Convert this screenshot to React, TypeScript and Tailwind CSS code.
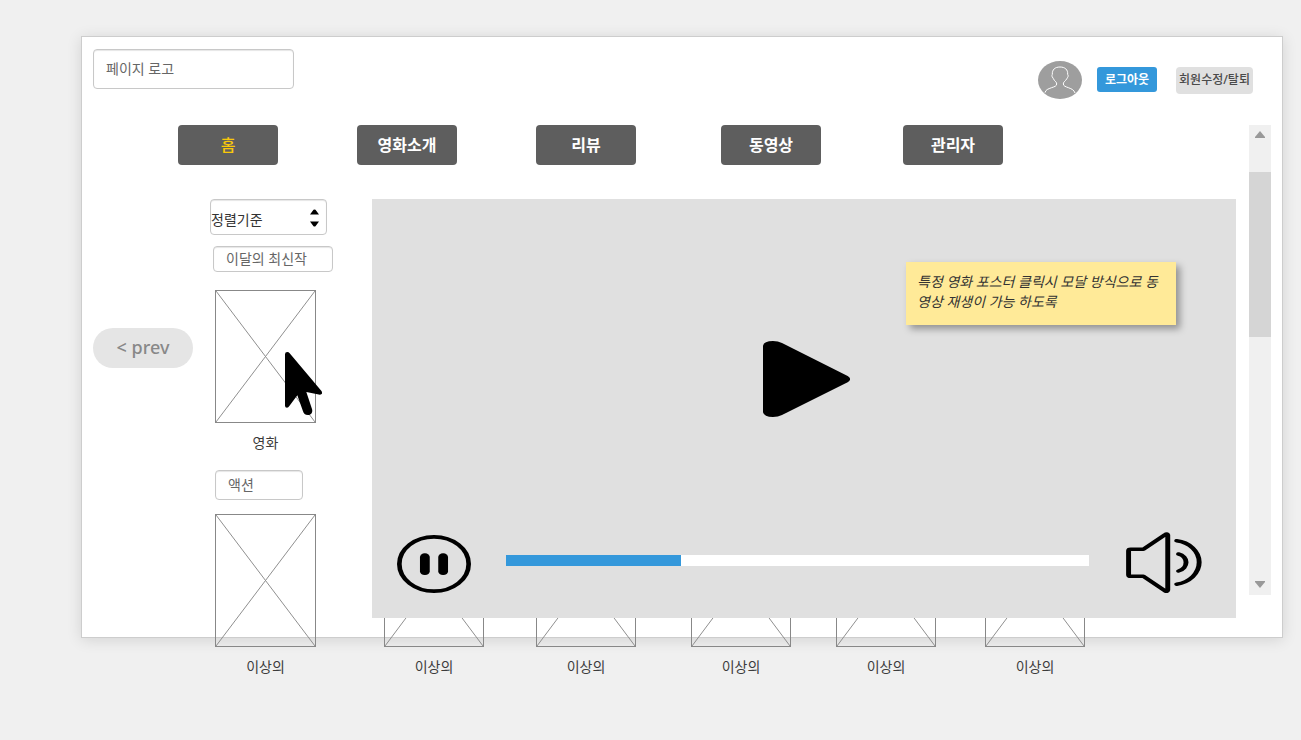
import { useState } from 'react';

const navItems = [
  { label: '홈', spacing: '', tone: 'text-[#f8c80a] font-medium' },
  { label: '영화소개', spacing: 'ml-[79px]', tone: 'text-white font-bold' },
  { label: '리뷰', spacing: 'ml-[79px]', tone: 'text-white font-bold' },
  { label: '동영상', spacing: 'ml-[85px]', tone: 'text-white font-bold' },
  { label: '관리자', spacing: 'ml-[82px]', tone: 'text-white font-bold' },
];

const shelf = ['', 'ml-[68px]', 'ml-[52px]', 'ml-[55px]', 'ml-[45px]', 'ml-[49px]'];

const fieldClass =
  'block rounded-[4px] border border-[#c8c8c8] bg-white px-3 pb-[2px] text-sm text-[#666] shadow-[inset_0_1px_1px_rgba(0,0,0,0.1)] outline-none';

function Poster({ title, wide = false }: { title: string; wide?: boolean }) {
  return (
    <figure className={wide ? 'w-[101px]' : 'w-[100px]'}>
      <svg className="block h-[133px] w-full border border-[#888]" viewBox="0 0 100 100" preserveAspectRatio="none" aria-hidden="true">
        <path d="M0 0L100 100M100 0L0 100" stroke="#8f8f8f" strokeWidth="1" vectorEffect="non-scaling-stroke" />
      </svg>
      <figcaption className="mt-[10px] text-center text-sm leading-5 text-[#3c3c3c]">{title}</figcaption>
    </figure>
  );
}

function Avatar() {
  return (
    <svg className="h-[38px] w-11" viewBox="0 0 132 114" role="img" aria-label="프로필">
      <ellipse cx="66" cy="57" rx="66" ry="57" fill="#9e9e9e" />
      <path
        d="M21 95C23 86 30 84 41 80C50 77 56 75 56 69C56 64 53 62 49 58C46 54 46 51 43 48C41 45 42 42 43 40C42 26 51 18 66 18C81 18 90 26 89 40C91 43 91 46 89 49C87 52 86 55 83 58C79 62 76 64 76 69C76 75 83 77 91 80C102 84 108 87 111 96"
        fill="none"
        stroke="#fff"
        strokeWidth="3"
      />
    </svg>
  );
}

function Cursor() {
  return (
    <svg className="pointer-events-none absolute top-[62px] left-[70px] h-16 w-[38px]" viewBox="0 0 114 192" aria-hidden="true">
      <path d="M0 7Q0 0 7 0Q11 0 14 4L110 118Q114 128 105 128L64 120L81 171C84 181 79 189 69 189C60 189 56 185 54 178L37 130L13 162Q10 167 6 167Q0 167 0 161Z" />
    </svg>
  );
}

function PlayIcon() {
  return (
    <svg className="h-[76px] w-[87px]" viewBox="0 0 261 228" aria-hidden="true">
      <path d="M0 14Q3 0 30 0Q45 0 57 6L254 105Q262 110 261 114Q262 119 254 124L57 222Q45 228 30 228Q3 228 0 214Z" />
    </svg>
  );
}

function PauseIcon() {
  return (
    <svg className="h-[58px] w-[74px]" viewBox="0 0 174 174" preserveAspectRatio="none" aria-hidden="true">
      <circle cx="87" cy="87" r="81.5" fill="none" stroke="#000" strokeWidth="11" />
      <rect x="54" y="55" width="23" height="65" rx="11" />
      <rect x="97" y="55" width="23" height="65" rx="11" />
    </svg>
  );
}

function SpeakerIcon() {
  return (
    <svg className="h-[61px] w-[76px]" viewBox="0 0 162 183" preserveAspectRatio="none" aria-hidden="true">
      <g fill="none" stroke="#000" strokeWidth="10.5" strokeLinecap="round" strokeLinejoin="round">
        <path d="M10 51.5H37L83 8Q88 3 89 9V174Q88 181 83 176L37 133H10Q5.500 133 5.500 128V56.5Q5.500 51.5 10 51.5Z" />
        <path d="M108 26.5C135 31 156 58 156 91C156 124 135 151 108 156.5" />
        <path d="M112 66C122 69 128 80 128 91C128 102 122 113 112 117" />
      </g>
    </svg>
  );
}

export default function App() {
  const [logo, setLogo] = useState('페이지 로고');
  const [latest, setLatest] = useState('이달의 최신작');
  const [genre, setGenre] = useState('액션');

  return (
    <div className="min-h-screen bg-[#f0f0f0] pt-9 pr-[18px] pb-[102px] pl-[81px] font-['Noto_Sans','Noto_Sans_CJK_KR',sans-serif]">
      <div className="border border-[#cdcdcd] bg-white pr-[11px] pl-[11px] shadow-[0_2px_14px_rgba(0,0,0,0.12)]">
        <header className="flex h-[88px] items-start justify-between pt-3 pr-[18px]">
          <input aria-label="페이지 로고" value={logo} onChange={(e) => setLogo(e.target.value)} className={`${fieldClass} h-10 w-[201px]`} />
          <div className="flex items-start pt-3">
            <Avatar />
            <button className="mt-[6px] ml-[15px] h-[25px] w-[60px] rounded-[3px] bg-[#3498db] text-xs font-bold text-white">로그아웃</button>
            <button className="mt-[6px] ml-[19px] h-[27px] w-[77px] rounded-[4px] bg-[#e0e0e0] pb-[2px] text-xs font-medium whitespace-nowrap text-[#4a4a4a]">
              회원수정/탈퇴
            </button>
          </div>
        </header>

        <div className="flex gap-[13px]">
          <div className="min-w-0 flex-1">
            <nav className="flex pl-[85px]">
              {navItems.map((item) => (
                <a
                  key={item.label}
                  href="#"
                  className={`flex h-10 w-[100px] shrink-0 items-center justify-center rounded-[4px] bg-[#5e5e5e] text-base ${item.spacing} ${item.tone}`}
                >
                  {item.label}
                </a>
              ))}
            </nav>

            <main className="mt-[34px] grid grid-cols-[117px_162px_minmax(0,1fr)] grid-rows-[auto_auto]">
              <button className="col-start-1 row-start-1 mt-[129px] h-10 w-[100px] rounded-full bg-[#e5e5e5] pb-[2px] text-lg font-medium text-[#888]">
                &lt; prev
              </button>

              <aside className="col-start-2 row-start-1">
                <div className="relative w-[117px]">
                  <select
                    aria-label="정렬기준"
                    className="block h-9 w-full appearance-none rounded-[4px] border border-[#c8c8c8] bg-white pt-[5px] text-sm text-[#333] shadow-[inset_0_1px_1px_rgba(0,0,0,0.1)] outline-none"
                  >
                    <option>정렬기준</option>
                  </select>
                  <svg className="pointer-events-none absolute top-[10px] right-2 h-[18px] w-[9px]" viewBox="0 0 9 18" aria-hidden="true">
                    <path d="M0 5.500H9L5.500 .8Q4.500 0 3.500 .8ZM0 12.500H9L5.500 17.200Q4.500 18 3.500 17.200Z" />
                  </svg>
                </div>
                <input
                  aria-label="이달의 최신작"
                  value={latest}
                  onChange={(e) => setLatest(e.target.value)}
                  className={`${fieldClass} mt-[11px] ml-[3px] h-[26px] w-[120px]`}
                />
                <div className="relative mt-[18px] ml-[5px]">
                  <Poster title="영화" wide />
                  <Cursor />
                </div>
                <input
                  aria-label="액션"
                  value={genre}
                  onChange={(e) => setGenre(e.target.value)}
                  className={`${fieldClass} mt-[17px] ml-[5px] h-[30px] w-[88px]`}
                />
              </aside>

              <ul className="col-start-2 col-end-4 row-start-2 mt-[14px] -mb-10 ml-[5px] flex">
                {shelf.map((spacing, index) => (
                  <li key={index} className={`shrink-0 ${spacing}`}>
                    <Poster title="이상의" wide={index === 0} />
                  </li>
                ))}
              </ul>

              <section aria-label="동영상" className="relative z-10 col-start-3 row-span-2 row-start-1 flex h-[419px] flex-col self-start bg-[#e0e0e0] pr-[34px] pl-[25px]">
                <p className="absolute top-[63px] right-[60px] h-[63px] w-[270px] bg-[#ffea98] px-[11px] py-[10px] text-sm leading-5 break-all text-[#333] italic shadow-[4px_4px_7px_rgba(0,0,0,0.35)]">
                  특정 영화 포스터 클릭시 모달 방식으로 동영상 재생이 가능 하도록
                </p>
                <button aria-label="재생" className="mt-[142px] ml-[14px] self-center">
                  <PlayIcon />
                </button>
                <div className="mt-[115px] flex items-center">
                  <button aria-label="일시정지" className="shrink-0 pt-[2px]">
                    <PauseIcon />
                  </button>
                  <progress
                    aria-label="재생 위치"
                    value={30}
                    max={100}
                    className="mr-[37px] mb-1 ml-[35px] h-[11px] min-w-0 flex-1 appearance-none border-0 bg-white [&::-moz-progress-bar]:bg-[#3498db] [&::-webkit-progress-bar]:bg-white [&::-webkit-progress-value]:bg-[#3498db]"
                  />
                  <button aria-label="음량" className="shrink-0">
                    <SpeakerIcon />
                  </button>
                </div>
              </section>
            </main>
          </div>

          <div className="mb-[42px] flex w-[22px] shrink-0 flex-col items-center justify-between bg-[#f0f0f0]">
            <button aria-label="위로" className="flex h-[47px] w-full items-start justify-center pt-[6px]">
              <svg className="h-[7px] w-[10px]" viewBox="0 0 10 7" aria-hidden="true">
                <path d="M0 7V6L5 0L10 6V7Z" fill="#999" />
              </svg>
            </button>
            <div className="h-[165px] w-full bg-[#d5d5d5]" />
            <div className="flex-1" />
            <button aria-label="아래로" className="flex w-full justify-center pb-[7px]">
              <svg className="h-[7px] w-[10px]" viewBox="0 0 10 7" aria-hidden="true">
                <path d="M0 0H10V1L5 7L0 1Z" fill="#999" />
              </svg>
            </button>
          </div>
        </div>
      </div>
    </div>
  );
}
